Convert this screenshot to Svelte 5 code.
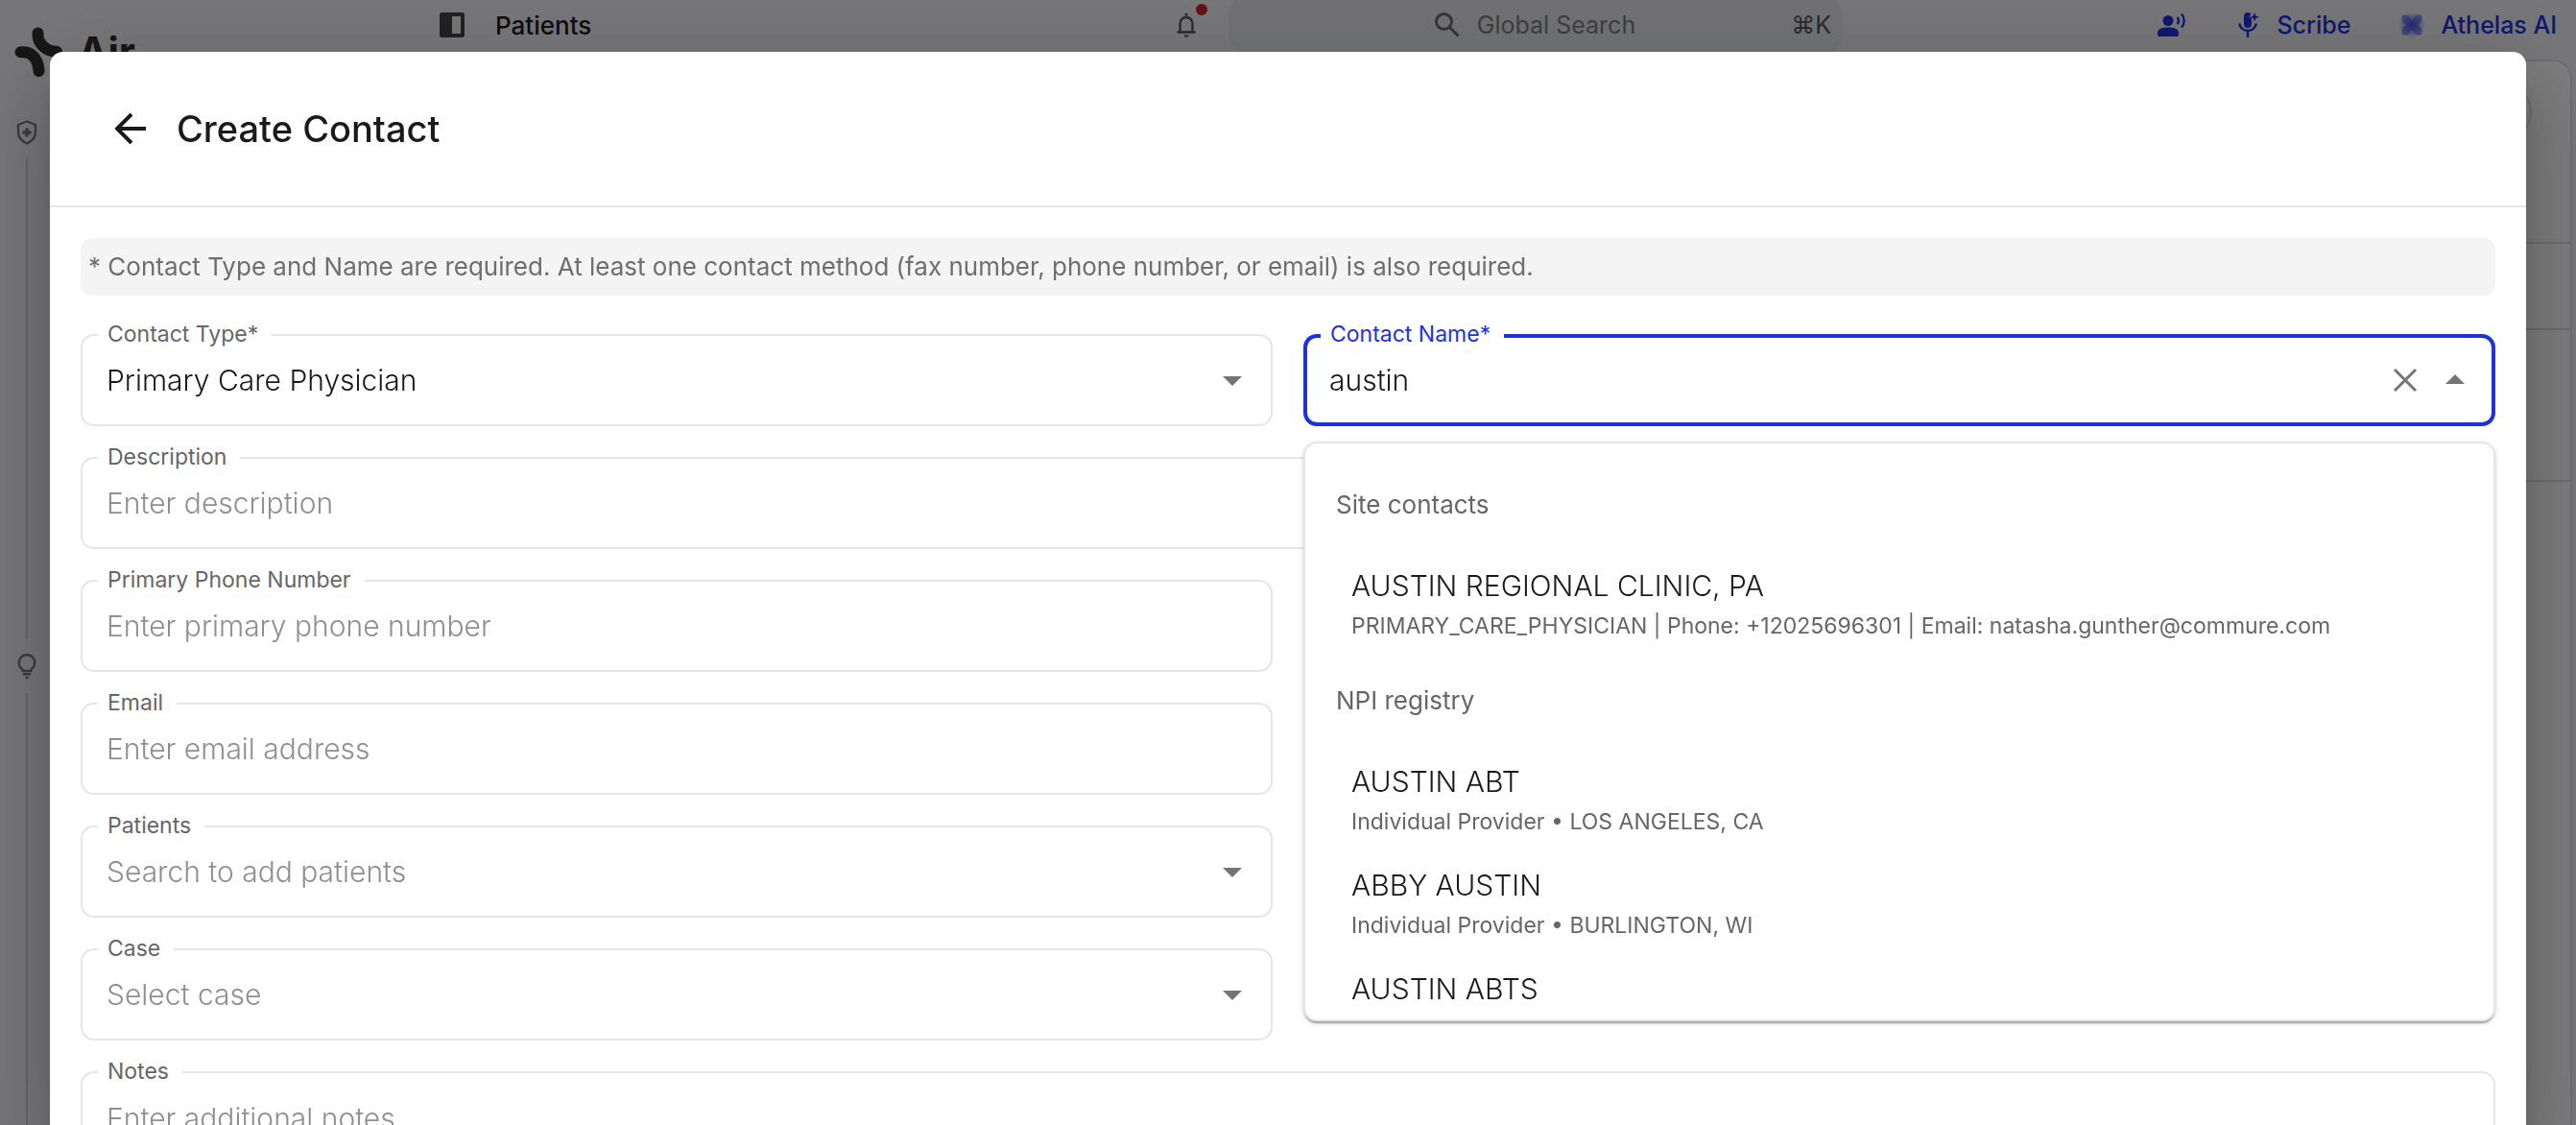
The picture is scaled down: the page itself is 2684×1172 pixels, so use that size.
<script lang="ts">
  // Create Contact modal, shown over the dimmed Patients page. The contact
  // name box is an autocomplete: its results come from the site's own
  // contacts first and from the NPI registry after that.

  interface Option {
    name: string;
    detail?: string;
  }

  interface Group {
    title: string;
    options: Option[];
  }

  const groups: Group[] = [
    {
      title: 'Site contacts',
      options: [
        {
          name: 'AUSTIN REGIONAL CLINIC, PA',
          detail:
            'PRIMARY_CARE_PHYSICIAN | Phone: +12025696301 | Email: natasha.gunther@commure.com',
        },
      ],
    },
    {
      title: 'NPI registry',
      options: [
        { name: 'AUSTIN ABT', detail: 'Individual Provider • LOS ANGELES, CA' },
        { name: 'ABBY AUSTIN', detail: 'Individual Provider • BURLINGTON, WI' },
        { name: 'AUSTIN ABTS' },
      ],
    },
  ];

  let contactType: string = $state('Primary Care Physician');
  let contactName: string = $state('austin');
  let listOpen: boolean = $state(true);

  function pick(option: Option): void {
    contactName = option.name;
    listOpen = false;
  }
</script>

{#snippet caret()}
  <svg class="caret" viewBox="0 0 24 24" aria-hidden="true"><path d="M7 10l5 5 5-5z" /></svg>
{/snippet}

<div class="app">
  <aside class="sidebar">
    <div class="logo">
      <svg viewBox="0 0 50 52" aria-hidden="true">
        <path d="M24.5 6.500V9C25 18 33.500 25.700 44 25.700" />
        <path d="M6.500 26.300H9C18.500 26.300 25 34 25.500 46" />
      </svg>
      <span>Air</span>
    </div>
    <nav class="rail" aria-label="Sections">
      <a href="#care" aria-label="Care">
        <svg viewBox="0 0 28 28">
          <path class="line" d="M14 2.500L23 6v7.500c0 6-3.800 9.800-9 12-5.200-2.200-9-6-9-12V6z" />
          <path class="plus" d="M14 9.500v9M9.500 14h9" />
        </svg>
      </a>
      <span class="rule"></span>
      <a href="#insights" aria-label="Insights">
        <svg viewBox="0 0 28 28">
          <path class="line" d="M9.500 17.500a8.300 8.300 0 1 1 9 0v1.500h-9z" />
          <path class="line" d="M10 22.300h8M12.500 26h3" />
        </svg>
      </a>
      <span class="rule grow"></span>
    </nav>
  </aside>

  <main class="page">
    <header class="topbar">
      <div class="crumbs">
        <button type="button" aria-label="Toggle sidebar">
          <svg viewBox="0 0 26 26" class="panel">
            <path fill-rule="evenodd" d="M2.500 0h21A2.500 2.500 0 0 1 26 2.500v21a2.500 2.500 0 0 1-2.500 2.500h-21A2.500 2.500 0 0 1 0 23.500v-21A2.500 2.500 0 0 1 2.500 0zM13 4v18h9V4z" />
          </svg>
        </button>
        <span class="crumb">Patients</span>
        <button type="button" class="bell" aria-label="Notifications">
          <svg viewBox="0 0 28 28">
            <path class="line" d="M7.500 21v-8.500a6.500 6.500 0 0 1 13 0V21M4.500 21.500h19" />
            <path d="M12.500 4.500V3a1.500 1.500 0 0 1 3 0v1.500zM11.500 24.500h5a2.500 2.200 0 0 1-5 0z" />
          </svg>
          <span class="dot"></span>
        </button>
      </div>
      <button type="button" class="search">
        <svg viewBox="0 0 26 26" aria-hidden="true">
          <circle cx="9.500" cy="9.500" r="8" />
          <path d="M15.500 15.500l9 9" />
        </svg>
        <span>Global Search</span>
        <kbd>⌘K</kbd>
      </button>
      <div class="tools">
        <button type="button" aria-label="Dictate">
          <svg viewBox="0 0 30 26" class="voice">
            <circle cx="11" cy="8.500" r="5.500" />
            <path d="M0 21.500C0 17 5 15.500 11 15.500s11 1.500 11 6V23a2 2 0 0 1-2 2H2a2 2 0 0 1-2-2z" />
            <path class="wave" d="M20.500 5c1.800 2.200 1.800 4.800 0 7M25 1.500c3.500 4.200 3.500 9.800 0 14" />
          </svg>
        </button>
        <button type="button" class="scribe">
          <svg viewBox="0 0 22 26" aria-hidden="true">
            <path d="M10 0c1.500 0 2.800.7 3.500 2L11 4.500l3 1.500V12a4 4 0 0 1-8 0V4a4 4 0 0 1 4-4z" />
            <path d="M17 0l1.300 3.400L22 4.700l-3.700 1.300L17 9.500l-1.300-3.500L12 4.700l3.700-1.300z" />
            <path class="wave" d="M1.200 11.500a8.900 8.900 0 0 0 17.600 0M10 20v6" />
          </svg>
          Scribe
        </button>
        <button type="button" class="athelas">
          <svg viewBox="0 0 28 28" aria-hidden="true">
            <defs>
              <radialGradient id="glow">
                <stop offset="0" stop-color="#1c31e0" stop-opacity="0.7" />
                <stop offset="1" stop-color="#1c31e0" stop-opacity="0" />
              </radialGradient>
            </defs>
            <circle cx="14" cy="14" r="14" fill="url(#glow)" />
            <g class="petals">
              <path d="M14 15C4 15 2 8 4 4c5-2 11 1 10 11z" />
              <path d="M14 15C13 5 19 2 24 4c2 5-1 11-10 11z" />
              <path d="M14 13c9 0 12 6 10 11-5 2-11-1-10-11z" />
              <path d="M14 13c1 10-5 13-10 11-2-5 1-11 10-11z" />
            </g>
          </svg>
          Athelas AI
        </button>
      </div>
    </header>
    <section class="card">
      <div class="card-head"><button type="button" class="round" aria-label="More"></button></div>
      <div class="card-tabs"></div>
      <div class="card-filters"></div>
    </section>
  </main>
</div>

<div class="backdrop">
  <div class="modal" role="dialog" aria-modal="true" aria-labelledby="modal-title">
    <header class="modal-head">
      <button type="button" aria-label="Back">
        <svg viewBox="0 0 32 32"><path d="M2 16h30M17 1L2 16l15 15" /></svg>
      </button>
      <h1 id="modal-title">Create Contact</h1>
    </header>

    <form class="modal-body" onsubmit={(e) => e.preventDefault()}>
      <p class="hint">
        * Contact Type and Name are required. At least one contact method (fax number, phone number,
        or email) is also required.
      </p>

      <div class="fields">
        <div class="field left">
          <label for="type">Contact Type*</label>
          <select id="type" bind:value={contactType}>
            <option>Primary Care Physician</option>
            <option>Specialist</option>
          </select>
          {@render caret()}
        </div>

        <div class="combo">
          <div class="field focused">
            <label for="name">Contact Name*</label>
            <input id="name" type="text" role="combobox" aria-expanded={listOpen} aria-controls="name-list" autocomplete="off" bind:value={contactName} />
            <button type="button" class="clear" aria-label="Clear" onclick={() => (contactName = '')}>
              <svg viewBox="0 0 40 40"><path d="M9 9l22 22M31 9L9 31" /></svg>
            </button>
            <button type="button" class="toggle" class:open={listOpen} aria-label="Close list" onclick={() => (listOpen = !listOpen)}>
              {@render caret()}
            </button>
          </div>
          {#if listOpen}
            <div class="results" id="name-list" role="listbox" aria-label="Contacts">
              {#each groups as group}
                <div class="group-title">{group.title}</div>
                {#each group.options as option}
                  <button type="button" class="option" role="option" aria-selected="false" onclick={() => pick(option)}>
                    <span class="option-name">{option.name}</span>
                    {#if option.detail}
                      <span class="option-detail">{option.detail}</span>
                    {/if}
                  </button>
                {/each}
              {/each}
            </div>
          {/if}
        </div>

        <div class="field wide">
          <label for="description">Description</label>
          <input id="description" type="text" placeholder="Enter description" />
        </div>
        <div class="field left">
          <label for="phone">Primary Phone Number</label>
          <input id="phone" type="tel" placeholder="Enter primary phone number" />
        </div>
        <div class="field left">
          <label for="email">Email</label>
          <input id="email" type="email" placeholder="Enter email address" />
        </div>
        <div class="field left">
          <label for="patients">Patients</label>
          <input id="patients" type="text" placeholder="Search to add patients" />
          <button type="button" class="toggle" aria-label="Open patients">{@render caret()}</button>
        </div>
        <div class="field left">
          <label for="case">Case</label>
          <input id="case" type="text" placeholder="Select case" />
          <button type="button" class="toggle" aria-label="Open cases">{@render caret()}</button>
        </div>
        <div class="field wide notes">
          <label for="notes">Notes</label>
          <textarea id="notes" rows="4" placeholder="Enter additional notes"></textarea>
        </div>
      </div>
    </form>
  </div>
</div>

<style>
  :global(body) {
    margin: 0;
    overflow: hidden;
    background: #efeef3;
    font-family: Inter, sans-serif;
    color: #1a1a1a;
  }

  button,
  input,
  select,
  textarea {
    appearance: none;
    border: none;
    background: none;
    margin: 0;
    padding: 0;
    color: inherit;
    font: inherit;
    outline: none;
  }

  button {
    cursor: pointer;
  }

  svg {
    display: block;
    flex: none;
  }

  /* page behind the modal */
  .app {
    display: flex;
    height: 100vh;
    overflow: hidden;
  }

  .sidebar {
    display: flex;
    flex-direction: column;
    flex: none;
    width: 440px;
    padding-top: 28px;
    box-sizing: border-box;
  }

  .logo {
    display: flex;
    align-items: center;
    gap: 16px;
    padding-left: 15px;
    font-size: 42px;
    font-weight: 700;
    line-height: 52px;
    color: #2e2e2e;
  }

  .logo svg {
    width: 50px;
    height: 52px;
    fill: none;
    stroke: #2e2e2e;
    stroke-width: 12;
    stroke-linecap: round;
  }

  .rail {
    display: flex;
    flex: 1;
    flex-direction: column;
    align-items: center;
    gap: 14px;
    width: 56px;
    margin-top: 44px;
  }

  .rail svg {
    width: 28px;
    height: 28px;
  }

  .line {
    fill: none;
    stroke: #7a7a80;
    stroke-width: 2.4;
    stroke-linejoin: round;
  }

  .plus {
    fill: none;
    stroke: #7a7a80;
    stroke-width: 3.4;
  }

  .rule {
    flex: none;
    width: 2px;
    height: 500px;
    background: #cfcfd5;
  }

  .rule.grow {
    flex: 1;
    height: auto;
  }

  .page {
    display: flex;
    flex: 1;
    flex-direction: column;
  }

  .topbar {
    display: flex;
    align-items: center;
    height: 52px;
    padding: 0 20px 0 18px;
    margin-bottom: 10px;
  }

  .crumbs {
    display: flex;
    flex: 1;
    align-items: center;
    gap: 32px;
  }

  .panel {
    width: 26px;
    height: 26px;
    fill: #444;
  }

  .crumb {
    flex: 1;
    font-size: 26px;
    font-weight: 500;
  }

  .bell {
    position: relative;
  }

  .bell svg {
    width: 28px;
    height: 28px;
    fill: #555;
  }

  .bell .line {
    stroke: #555;
  }

  .bell .dot {
    position: absolute;
    top: -8px;
    right: -8px;
    width: 12px;
    height: 12px;
    border-radius: 50%;
    background: #c8282a;
  }

  .search {
    display: flex;
    align-items: center;
    justify-content: flex-end;
    gap: 18px;
    width: 640px;
    height: 60px;
    margin: 0 0 0 30px;
    padding: 0 12px;
    box-sizing: border-box;
    border-radius: 20px;
    background: #e4e5ea;
    font-size: 25px;
    color: #7c7c82;
  }

  .search svg {
    width: 26px;
    height: 26px;
    fill: none;
    stroke: #6c6c70;
    stroke-width: 3;
  }

  .search kbd {
    margin-left: 144px;
    font: inherit;
    color: #555;
  }

  .tools {
    display: flex;
    align-items: center;
    justify-content: flex-end;
    width: 744px;
    font-size: 25px;
    font-weight: 500;
    color: #1c31e0;
  }

  .tools button {
    display: flex;
    align-items: center;
  }

  .tools svg {
    fill: #1c31e0;
  }

  .wave {
    fill: none;
    stroke: #1c31e0;
    stroke-width: 2.4;
  }

  .voice {
    width: 30px;
    height: 26px;
  }

  .scribe {
    gap: 18px;
    margin: 0 50px 0 54px;
  }

  .scribe svg {
    width: 22px;
    height: 26px;
  }

  .athelas {
    gap: 16px;
  }

  .athelas svg {
    width: 28px;
    height: 28px;
  }

  .petals {
    opacity: 0.4;
  }

  .card {
    flex: 1;
    margin-right: 4px;
    border: 2px solid #dcdce0;
    border-bottom: none;
    border-radius: 20px 20px 0 0;
    background: #fbfbfb;
  }

  .card-head,
  .card-tabs,
  .card-filters {
    display: flex;
    justify-content: flex-end;
    box-sizing: border-box;
    border-bottom: 2px solid #dcdce0;
  }

  .card-head {
    height: 190px;
    padding: 22px 40px;
  }

  .card-tabs {
    height: 90px;
  }

  .card-filters {
    height: 158px;
  }

  .round {
    width: 62px;
    height: 62px;
    box-sizing: border-box;
    border: 2px solid #dcdce0;
    border-radius: 50%;
  }

  /* modal */
  .backdrop {
    position: fixed;
    inset: 0;
    box-sizing: border-box;
    padding: 54px 52px 0;
    overflow: hidden;
    background: rgba(0, 0, 0, 0.5);
  }

  .modal {
    height: 100%;
    overflow: hidden;
    border-radius: 14px 14px 0 0;
    background: #fff;
    box-shadow:
      0 22px 30px -14px rgba(0, 0, 0, 0.2),
      0 48px 76px 6px rgba(0, 0, 0, 0.14),
      0 18px 92px 16px rgba(0, 0, 0, 0.12);
  }

  .modal-head {
    display: flex;
    align-items: center;
    gap: 32px;
    height: 160px;
    padding: 0 68px;
    border-bottom: 2px solid #e6e6e6;
  }

  .modal-head svg {
    width: 32px;
    height: 32px;
    fill: none;
    stroke: #1a1a1a;
    stroke-width: 4;
  }

  .modal-head h1 {
    margin: 0;
    font-size: 38px;
    font-weight: 500;
    line-height: 48px;
  }

  .modal-body {
    padding: 32px;
  }

  .hint {
    margin: 0 0 40px;
    padding: 0 8px;
    border-radius: 12px;
    background: #f4f4f4;
    font-size: 26px;
    line-height: 60px;
    color: #6e6e6e;
  }

  .fields {
    display: grid;
    grid-template-columns: 1fr 1fr;
    gap: 32px;
  }

  .field {
    position: relative;
    display: flex;
    align-items: center;
    height: 96px;
    padding: 0 16px 0 25px;
    box-sizing: border-box;
    border: 2px solid #e6e6e6;
    border-radius: 14px;
    background: #fff;
  }

  .left {
    grid-column: 1;
  }

  .wide {
    grid-column: 1 / -1;
  }

  .notes {
    height: auto;
    padding: 24px 25px;
  }

  /* sits over the border and cuts a gap into it */
  .field label {
    position: absolute;
    top: -16px;
    left: 16px;
    padding: 0 14px 0 10px;
    background: #fff;
    font-size: 23px;
    line-height: 28px;
    color: #666;
  }

  .field input,
  .field select,
  .field textarea {
    flex: 1;
    min-width: 0;
    font-size: 30px;
    font-weight: 300;
    line-height: 46px;
  }

  .field textarea {
    resize: none;
  }

  .field ::placeholder {
    color: #8f8f8f;
    opacity: 1;
  }

  .focused {
    padding: 0 14px 0 23px;
    border: 4px solid #1d32dc;
  }

  .focused label {
    top: -18px;
    left: 14px;
    color: #1d32dc;
  }

  .caret {
    width: 48px;
    height: 48px;
    fill: #757575;
  }

  .clear {
    margin-right: 8px;
  }

  .clear svg {
    width: 40px;
    height: 40px;
    fill: none;
    stroke: #757575;
    stroke-width: 3;
  }

  .toggle.open {
    transform: rotate(180deg);
  }

  .combo {
    position: relative;
  }

  .results {
    position: absolute;
    top: calc(100% + 16px);
    left: 0;
    right: 0;
    z-index: 1;
    max-height: 604px;
    box-sizing: border-box;
    padding: 16px 0;
    overflow: hidden;
    border: 2px solid #e6e6e6;
    border-radius: 14px;
    background: #fff;
    box-shadow:
      0 4px 2px -2px rgba(0, 0, 0, 0.2),
      0 2px 2px rgba(0, 0, 0, 0.14),
      0 2px 6px rgba(0, 0, 0, 0.12);
  }

  .group-title {
    padding: 0 32px;
    font-size: 26px;
    line-height: 96px;
    color: #666;
  }

  .option {
    display: block;
    width: 100%;
    padding: 12px 48px;
    text-align: left;
  }

  .option-name,
  .option-detail {
    display: block;
  }

  .option-name {
    font-size: 30px;
    font-weight: 300;
    line-height: 48px;
  }

  .option-detail {
    font-size: 23px;
    line-height: 36px;
    color: #666;
  }
</style>
